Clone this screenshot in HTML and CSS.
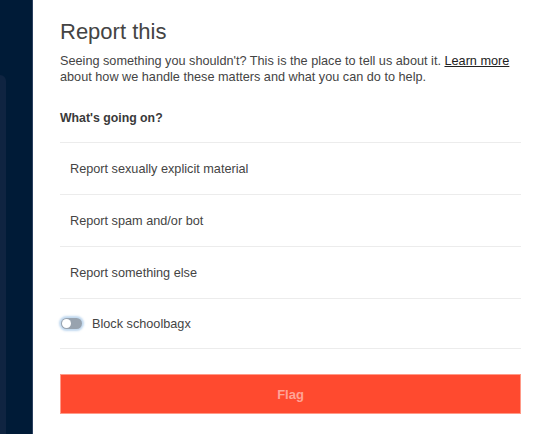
FILE: index.html
```html
<!DOCTYPE html>
<html>
<head>
<meta charset="utf-8">
<link rel="stylesheet" href="styles.css">
</head>
<body>
<div class="page">
  <aside class="side">
    <div class="side-card"></div>
  </aside>
  <main class="panel">
    <h1 class="title">Report this</h1>
    <p class="intro">Seeing something you shouldn't? This is the place to tell us about it. <a class="link" href="#">Learn more</a> about how we handle these matters and what you can do to help.</p>
    <h2 class="question">What's going on?</h2>
    <ul class="options">
      <li class="option">Report sexually explicit material</li>
      <li class="option">Report spam and/or bot</li>
      <li class="option">Report something else</li>
      <li class="toggle-row">
        <span class="toggle"><span class="knob"></span></span>
        <span class="toggle-label">Block schoolbagx</span>
      </li>
    </ul>
    <button class="flag">Flag</button>
  </main>
</div>
</body>
</html>
```
FILE: styles.css
```css
html, body {
  margin: 0;
  padding: 0;
  height: 100%;
  background: #ffffff;
}
body {
  font-family: "Liberation Sans", Arial, sans-serif;
  color: #444;
}
.page {
  display: flex;
  height: 434px;
  overflow: hidden;
}
.side {
  width: 32px;
  flex: none;
  background: #001b37;
  border-right: 1px solid #2b4160;
  padding-top: 75px;
  box-sizing: content-box;
}
.side-card {
  width: 6px;
  height: 400px;
  background: #0f2441;
  border-radius: 0 8px 0 0;
}
.panel {
  flex: 1;
  padding: 0 19px 0 27px;
}
.title {
  font-size: 22px;
  font-weight: normal;
  color: #444;
  margin: 19px 0 0;
  line-height: 26px;
}
.intro {
  font-size: 12.7px;
  line-height: 16px;
  margin: 8px 0 0;
  color: #444;
}
.link {
  color: #222;
  text-decoration: underline;
}
.question {
  font-size: 12.3px;
  font-weight: bold;
  color: #3a3a3a;
  margin: 25px 0 0;
  line-height: 16px;
}
.options {
  list-style: none;
  margin: 16px 0 0;
  padding: 0;
  border-top: 1px solid #ececec;
}
.option {
  height: 51px;
  display: flex;
  align-items: center;
  padding-left: 10px;
  font-size: 12.7px;
  color: #444;
  border-bottom: 1px solid #ececec;
}
.toggle-row {
  height: 49px;
  display: flex;
  align-items: center;
  border-bottom: 1px solid #ececec;
  font-size: 12.7px;
  color: #444;
}
.toggle {
  width: 21px;
  height: 11px;
  border-radius: 6px;
  background: #98a3af;
  margin-left: 1px;
  margin-right: 10px;
  display: flex;
  align-items: center;
  padding-left: 1px;
  box-sizing: border-box;
  box-shadow: 0 0 2px 2px rgba(120, 170, 220, 0.45);
}
.knob {
  width: 9px;
  height: 9px;
  border-radius: 50%;
  background: #ffffff;
}
.flag {
  display: block;
  width: 100%;
  height: 40px;
  margin-top: 25px;
  background: #ff4a2f;
  border: 1px solid #ff9a88;
  color: rgba(255, 255, 255, 0.5);
  font-family: "Liberation Sans", Arial, sans-serif;
  font-size: 13px;
  font-weight: bold;
  padding: 0;
}
```
